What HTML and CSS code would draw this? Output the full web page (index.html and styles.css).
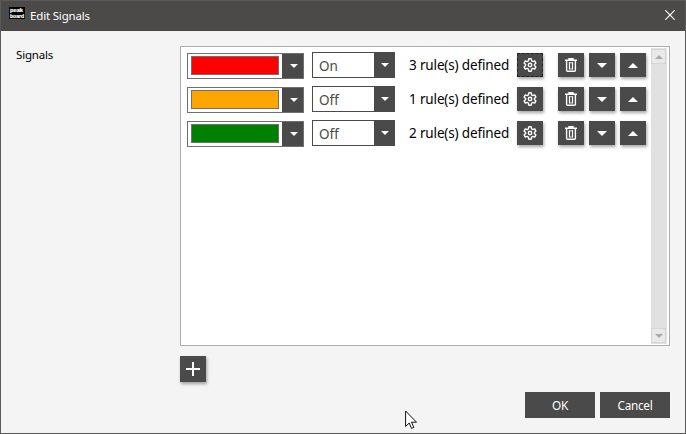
FILE: index.html
```html
<!DOCTYPE html>
<html lang="en">
<head>
<meta charset="utf-8">
<title>Edit Signals</title>
<link rel="stylesheet" href="styles.css">
</head>
<body>
<svg class="defs" width="0" height="0">
  <symbol id="down" viewBox="0 0 10 5"><path d="M0 0h10L5 5z" fill="#fff"/></symbol>
  <symbol id="up" viewBox="0 0 10 5"><path d="M0 5h10L5 0z" fill="#fff"/></symbol>
  <symbol id="gear" viewBox="0 0 14 14"><g fill="none" stroke="#fff" stroke-width="1.4" stroke-linejoin="round"><path d="M5.800.8h2.400l.5 2.200 1 .6 2-.7 1.200 2.200-1.500 1.400v1l1.500 1.400-1.200 2.200-2-.7-1 .6-.5 2.200H5.800l-.5-2.200-1-.6-2 .7-1.200-2.200 1.500-1.400v-1L1.100 5.100l1.200-2.200 2 .7 1-.6z"/><circle cx="7" cy="7" r="1.700"/></g></symbol>
  <symbol id="trash" viewBox="0 0 12 14"><g fill="none" stroke="#fff"><path stroke-width="1.400" d="M0 2.300h12M4 2V.7h4V2M1.600 2.500v9.800q0 1 1 1h6.800q1 0 1-1V2.500"/><path d="M4.500 4.300v7M7.500 4.300v7" stroke-width="1.200"/><path d="M4 4.700h4M4 11h4" stroke-width=".8"/></g></symbol>
</svg>
<div class="window">
  <header class="titlebar">
    <svg class="logo" width="16" height="12" viewBox="0 0 16 12"><rect width="16" height="12" fill="#000"/><text x="1" y="5" textLength="13" lengthAdjust="spacingAndGlyphs">peak</text><text x="1" y="10.600" textLength="14" lengthAdjust="spacingAndGlyphs">board</text></svg>
    <span class="title">Edit Signals</span>
    <svg class="close" width="10" height="10" viewBox="0 0 10 10"><path d="M.3.3l9.400 9.400M9.700.3L.3 9.700" stroke="#fff" stroke-width="1.200"/></svg>
  </header>
  <main class="content">
    <div class="label">Signals</div>
    <div class="field">
      <div class="list">
        <div class="rows">
          <div class="row">
            <div class="color"><i class="swatch red"></i><b class="drop"><svg width="8" height="4"><use href="#down"/></svg></b></div>
            <div class="combo"><span>On</span><b class="drop"><svg width="8" height="4"><use href="#down"/></svg></b></div>
            <span class="rules">3 rule(s) defined</span>
            <button class="tool gear focused"><svg width="14" height="14"><use href="#gear"/></svg></button>
            <button class="tool"><svg width="12" height="14"><use href="#trash"/></svg></button>
            <button class="tool"><svg width="10" height="5"><use href="#down"/></svg></button>
            <button class="tool"><svg width="10" height="5"><use href="#up"/></svg></button>
          </div>
          <div class="row">
            <div class="color"><i class="swatch orange"></i><b class="drop"><svg width="8" height="4"><use href="#down"/></svg></b></div>
            <div class="combo"><span>Off</span><b class="drop"><svg width="8" height="4"><use href="#down"/></svg></b></div>
            <span class="rules">1 rule(s) defined</span>
            <button class="tool gear"><svg width="14" height="14"><use href="#gear"/></svg></button>
            <button class="tool"><svg width="12" height="14"><use href="#trash"/></svg></button>
            <button class="tool"><svg width="10" height="5"><use href="#down"/></svg></button>
            <button class="tool"><svg width="10" height="5"><use href="#up"/></svg></button>
          </div>
          <div class="row">
            <div class="color"><i class="swatch green"></i><b class="drop"><svg width="8" height="4"><use href="#down"/></svg></b></div>
            <div class="combo"><span>Off</span><b class="drop"><svg width="8" height="4"><use href="#down"/></svg></b></div>
            <span class="rules">2 rule(s) defined</span>
            <button class="tool gear"><svg width="14" height="14"><use href="#gear"/></svg></button>
            <button class="tool"><svg width="12" height="14"><use href="#trash"/></svg></button>
            <button class="tool"><svg width="10" height="5"><use href="#down"/></svg></button>
            <button class="tool"><svg width="10" height="5"><use href="#up"/></svg></button>
          </div>
        </div>
        <div class="scrollbar">
          <div class="step"><svg width="8" height="4" viewBox="0 0 8 4"><path d="M0 4h8L4 0z" fill="#aaa"/></svg></div>
          <div class="step"><svg width="8" height="4" viewBox="0 0 8 4"><path d="M0 0h8L4 4z" fill="#aaa"/></svg></div>
        </div>
      </div>
      <button class="tool add"><svg width="14" height="14" viewBox="0 0 14 14"><path d="M7 0v14M0 7h14" stroke="#fff" stroke-width="2"/></svg></button>
    </div>
  </main>
  <footer class="actions">
    <button class="action">OK</button>
    <button class="action">Cancel</button>
  </footer>
</div>
<svg class="cursor" width="13" height="20" viewBox="0 0 13 20"><path d="M.6 1v15.500l3.600-3.500 2.300 5.400 2.300-1-2.300-5.200h5z" fill="#fff" stroke="#111" stroke-width="1"/></svg>
</body>
</html>
```
FILE: styles.css
```css
* { box-sizing: border-box; }
body {
  margin: 0;
  font: 12px "Noto Sans", "Open Sans", sans-serif;
  color: #000;
}
svg { display: block; flex: none; }
button { border: 0; padding: 0; font: inherit; color: #fff; background: #4a4a4a; }
.defs { position: absolute; }
.window {
  width: 686px;
  height: 434px;
  border: 1px solid #5a5a5a;
  background: #f4f4f4;
  display: flex;
  flex-direction: column;
}
.titlebar {
  height: 30px;
  flex: none;
  display: flex;
  align-items: center;
  padding: 0 10px 0 8px;
  background: #4c4a48;
  color: #fff;
}
.logo { margin-top: -6px; overflow: visible; }
.logo text { font: bold 5px "Liberation Sans", sans-serif; fill: #fff; stroke: #fff; stroke-width: .2px; }
.title { margin: -2px 0 0 5px; font-size: 11.5px; letter-spacing: -.17px; }
.close { margin: -2px 0 0 auto; }
.content { display: flex; padding: 15px 15px 0; height: 361px; }
.label { width: 164px; line-height: 18px; font-size: 11.5px; letter-spacing: -.17px; }
.field { width: 490px; }
.list {
  height: 300px;
  border: 1px solid #abadb3;
  background: #fff;
  display: flex;
  justify-content: space-between;
  padding: 1px 2px 1px 6px;
}
.rows { padding-top: 4px; }
.row { height: 34px; display: flex; align-items: flex-start; }
.color {
  width: 117px;
  height: 26px;
  margin-top: 1px;
  border: 1px solid #707070;
  display: flex;
  align-items: center;
  justify-content: space-between;
  padding-left: 3px;
}
.swatch { width: 88px; height: 19px; margin-top: -1px; border: 1px solid #707070; }
.red { background: #f00; }
.orange { background: #ffa500; }
.green { background: #008000; }
.drop {
  width: 21px;
  height: 24px;
  background: #4a4a4a;
  display: flex;
  align-items: center;
  justify-content: center;
}
.color .drop { padding-left: 2px; }
.combo {
  width: 83px;
  height: 26px;
  margin-left: 8px;
  border: 1px solid #4a4a4a;
  display: flex;
  align-items: center;
  justify-content: space-between;
  padding-left: 6px;
  font-size: 13.5px;
  color: #4a4a4a;
}
.combo span { padding-top: 1px; }
.combo .drop { width: 20px; padding-left: 1px; }
.rules { width: 108px; margin-left: 14px; line-height: 26px; font-size: 13.5px; letter-spacing: -.15px; white-space: nowrap; }
.tool {
  width: 26px;
  height: 24px;
  margin: 1px 5px 0 0;
  display: flex;
  align-items: center;
  justify-content: center;
  box-shadow: 1px 2px 3px rgba(0, 0, 0, .35);
}
.gear { margin-right: 15px; }
.focused { outline: 1px dashed #222; outline-offset: -1px; }
.row .tool:last-child { margin-right: 0; }
.scrollbar {
  width: 16px;
  background: #e1e1e1;
  display: flex;
  flex-direction: column;
  justify-content: space-between;
  padding: 1px 1px 1px 0;
}
.step {
  height: 15px;
  border: 1px solid #d5d5d5;
  background: #e9e9e9;
  display: flex;
  align-items: center;
  justify-content: center;
}
.add { height: 26px; margin-top: 10px; }
.actions { display: flex; justify-content: flex-end; gap: 5px; padding-right: 15px; }
.action { width: 70px; height: 26px; font-size: 11.8px; letter-spacing: -.3px; }
.cursor { position: absolute; left: 405px; top: 410px; }
```
